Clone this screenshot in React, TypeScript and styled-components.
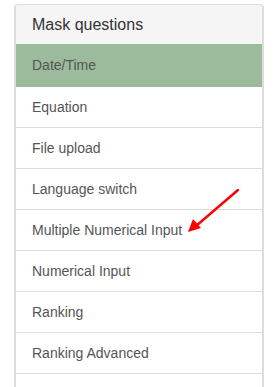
import React from "react";
import styled, { createGlobalStyle } from "styled-components";

const items = [
  "Date/Time",
  "Equation",
  "File upload",
  "Language switch",
  "Multiple Numerical Input",
  "Numerical Input",
  "Ranking",
  "Ranking Advanced",
  "",
];

export default function App() {
  return (
    <>
      <Global />
      <Page>
        <Panel>
          <Heading>Mask questions</Heading>
          <List>
            {items.map((item, i) => (
              <Item key={i} active={i === 0}>
                {item}
                {item === "Multiple Numerical Input" && (
                  <Arrow width="60" height="52" viewBox="0 0 60 52">
                    <line x1="54" y1="2" x2="12" y2="38" stroke="#f00" strokeWidth="2.4" strokeLinecap="round" />
                    <polygon points="4,44 9,31 17,40" fill="#f00" />
                  </Arrow>
                )}
              </Item>
            ))}
          </List>
        </Panel>
      </Page>
    </>
  );
}

const Global = createGlobalStyle`
  body {
    margin: 0;
    background: #fff;
    font-family: "Liberation Sans", Arial, sans-serif;
  }
`;
const Page = styled.div`
  padding: 4px 0 0 14px;
  width: 250px;
  height: 383px;
  overflow: hidden;
`;
const Panel = styled.div`
  border: 2px solid #ddd;
  border-bottom: none;
  border-top-width: 1px;
  border-radius: 4px 4px 0 0;
  background: #fff;
`;
const Heading = styled.div`
  background: #f5f5f5;
  color: #333;
  font-size: 16px;
  line-height: 20px;
  padding: 10px 16px 9px;
  border-radius: 3px 3px 0 0;
`;
const List = styled.div`
  display: flex;
  flex-direction: column;
`;
const Item = styled.div<{ active?: boolean }>`
  position: relative;
  height: 20px;
  padding: ${(p) => (p.active ? "11px 16px 11px" : "10px 16px")};
  font-size: 14px;
  line-height: 20px;
  color: #555;
  background: ${(p) => (p.active ? "#9cbb9c" : "#fff")};
  border-bottom: 1px solid #ddd;
  border-bottom-color: ${(p) => (p.active ? "#9cbb9c" : "#ddd")};
`;
const Arrow = styled.svg`
  position: absolute;
  left: 168px;
  top: -22px;
`;
